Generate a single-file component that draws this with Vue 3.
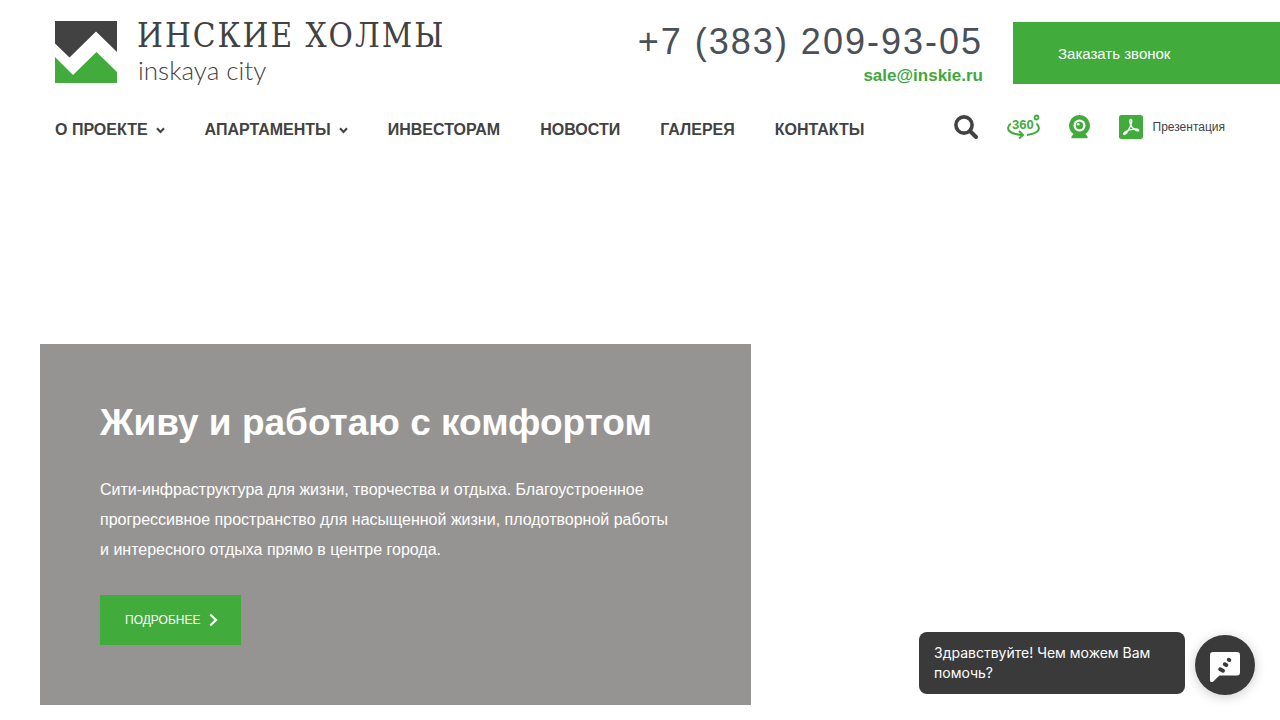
<script setup>
const nav = [
  { label: 'О ПРОЕКТЕ', sub: true },
  { label: 'АПАРТАМЕНТЫ', sub: true },
  { label: 'ИНВЕСТОРАМ' },
  { label: 'НОВОСТИ' },
  { label: 'ГАЛЕРЕЯ' },
  { label: 'КОНТАКТЫ' },
]
</script>

<template>
  <div class="page">
    <header>
      <div class="top">
        <a class="logo" href="#">
          <svg class="mark" width="62" height="62" viewBox="0 0 62 62" aria-hidden="true">
            <path fill="#424242" d="M0 0H62V31L41 10.500 14.500 36.500 0 22.500Z" />
            <path fill="#41ab3c" d="M0 36L18 54 41.500 31 62 51V62H0Z" />
          </svg>
          <span class="words">
            <span class="name">ИНСКИЕ ХОЛМЫ</span>
            <span class="latin">inskaya city</span>
          </span>
        </a>
        <div class="contacts">
          <a class="phone" href="tel:+73832099305">+7 (383) 209-93-05</a>
          <a class="mail" href="mailto:sale@inskie.ru">sale@inskie.ru</a>
        </div>
        <button class="call" type="button">Заказать звонок</button>
      </div>

      <div class="bar">
        <nav>
          <a v-for="item in nav" :key="item.label" href="#">
            {{ item.label }}
            <svg v-if="item.sub" width="9" height="7" viewBox="0 0 9 7" aria-hidden="true">
              <path d="M1 1.200L4.500 5 8 1.200" fill="none" stroke="#424242" stroke-width="2" />
            </svg>
          </a>
        </nav>
        <div class="tools">
          <button class="tool" type="button" aria-label="Поиск">
            <svg width="24" height="24" viewBox="0 0 24 24">
              <circle cx="10" cy="10" r="8.100" fill="none" stroke="#424242" stroke-width="3.600" />
              <path d="M16 16L22 22" stroke="#424242" stroke-width="4" stroke-linecap="round" />
            </svg>
          </button>
          <a class="tool" href="#" aria-label="Панорама 360">
            <svg width="33" height="26" viewBox="0 0 33 26" fill="none" stroke="#41ab3c" stroke-width="2">
              <path d="M4 9.500C2 11 1 12.500 1 14C1 17.500 6.500 20.300 15 21" />
              <path d="M12 17L16 21 12 24.500" />
              <path d="M29.500 9.500C31 11 32 12.500 32 14C32 17.500 27 20 20 20.900" />
              <circle cx="29.500" cy="3.500" r="2" stroke-width="1.800" />
              <text x="5" y="15" fill="#41ab3c" stroke="none" font-family="Liberation Sans, sans-serif" font-weight="700" font-size="13">360</text>
            </svg>
          </a>
          <a class="tool" href="#" aria-label="Веб-камера">
            <svg width="21" height="24" viewBox="0 0 21 24">
              <path fill="#41ab3c" d="M10.500 0A10.500 10.500 0 0 1 16.500 19L18.500 21.500V23.200H2.500V21.500L4.500 19A10.500 10.500 0 0 1 10.500 0Z" />
              <circle cx="10.500" cy="10.500" r="6" fill="#fff" />
              <circle cx="10.500" cy="10.500" r="3.700" fill="#41ab3c" />
              <circle cx="9.200" cy="9.200" r="1.300" fill="#fff" />
            </svg>
          </a>
          <a class="tool pdf" href="#">
            <svg width="24" height="24" viewBox="0 0 24 24" aria-hidden="true">
              <rect width="24" height="24" rx="2.500" fill="#41ab3c" />
              <path d="M11.500 4.500C13.500 3.800 12.800 8 11.300 11.300C9.300 15.700 6.500 20 5 19.300C3.600 18.500 7 15.800 11.500 14.600C15.500 13.500 20 13.900 19.700 15.500C19.300 17 14.500 14.500 12.500 11.300C10.800 8.500 10.200 4.900 11.500 4.500Z" fill="none" stroke="#fff" stroke-width="1.400" />
            </svg>
            <span>Презентация</span>
          </a>
        </div>
      </div>
    </header>

    <main>
      <section class="hero">
        <h1>Живу и работаю с комфортом</h1>
        <p>Сити-инфраструктура для жизни, творчества и отдыха. Благоустроенное прогрессивное пространство для насыщенной жизни, плодотворной работы и&nbsp;интересного отдыха прямо в центре города.</p>
        <a class="more" href="#">
          ПОДРОБНЕЕ
          <svg width="9" height="14" viewBox="0 0 9 14" aria-hidden="true">
            <path d="M1.200 1.500L7 7 1.200 12.500" fill="none" stroke="#fff" stroke-width="2.200" />
          </svg>
        </a>
      </section>
    </main>

    <aside class="chat">
      <p>Здравствуйте! Чем можем Вам помочь?</p>
      <button type="button" aria-label="Открыть чат">
        <svg width="30" height="30" viewBox="0 0 30 30">
          <path fill="#fff" d="M3 0H27A3 3 0 0 1 30 3V20.500A3 3 0 0 1 27 23.500H9.500L3 29.700C1.500 31 0 30 0 28V3A3 3 0 0 1 3 0Z" />
          <g stroke="#3a3a3a" stroke-width="4" stroke-linecap="round">
            <path d="M10.200 17.300L13 18.700" />
            <path d="M14.800 12.300L16.300 13.100" />
            <path d="M18.800 7.800L19.300 8" />
          </g>
        </svg>
      </button>
    </aside>
  </div>
</template>

<style>
body {
  margin: 0;
  background: #fff;
}
</style>

<style scoped>
.page {
  font-family: "Liberation Sans", Arial, sans-serif;
  color: #424242;
}
a {
  color: inherit;
  text-decoration: none;
}
button {
  border: 0;
  font-family: inherit;
  cursor: pointer;
}
svg {
  display: block;
  flex: none;
}
.top {
  display: flex;
  align-items: flex-start;
  padding: 21px 0 0 55px;
}
.logo {
  display: flex;
  gap: 20px;
}
.words {
  display: flex;
  flex-direction: column;
}
.name {
  font: 33px/30px "DejaVu Serif Condensed", "DejaVu Serif", serif;
  letter-spacing: 2px;
  white-space: nowrap;
}
.latin {
  font: 300 26px/38px Lato, sans-serif;
  padding-left: 1px;
}
.contacts {
  display: flex;
  flex-direction: column;
  align-items: flex-end;
  margin-left: auto;
  margin-right: 30px;
}
.phone {
  font-size: 36px;
  line-height: 42px;
  letter-spacing: 2px;
  color: #495057;
  white-space: nowrap;
}
.mail {
  font-size: 17px;
  font-weight: 700;
  line-height: 26px;
  color: #41a73c;
}
.call {
  width: 267px;
  height: 62px;
  margin-top: 1px;
  padding: 0 45px;
  background: #41ab3c;
  color: #fff;
  font-size: 15px;
  text-align: left;
}
.bar {
  display: flex;
  align-items: center;
  justify-content: space-between;
  padding: 23px 55px 0;
}
nav {
  display: flex;
  gap: 40px;
  padding-top: 6px;
}
nav a {
  display: flex;
  align-items: center;
  gap: 8px;
  font-size: 16px;
  font-weight: 700;
  line-height: 24px;
  white-space: nowrap;
}
.tools {
  display: flex;
  align-items: center;
  gap: 29px;
}
.tool {
  display: flex;
  align-items: center;
  padding: 0;
  background: none;
}
.pdf {
  gap: 10px;
  font-size: 12px;
}
.hero {
  box-sizing: border-box;
  width: 711px;
  max-width: calc(100% - 80px);
  margin: 202px 40px 0;
  padding: 57px 60px 60px;
  background: #969492;
  color: #fff;
}
.hero h1 {
  margin: 0 0 30px;
  font-size: 37px;
  line-height: 44px;
}
.hero p {
  margin: 0 0 30px;
  font-size: 16px;
  line-height: 30px;
}
.more {
  display: inline-flex;
  align-items: center;
  gap: 9px;
  height: 50px;
  padding: 0 23px 0 25px;
  background: #41ab3c;
  font-size: 12px;
  vertical-align: top;
}
.chat {
  position: fixed;
  right: 25px;
  bottom: 22px;
  display: flex;
  align-items: center;
  gap: 10px;
}
.chat p {
  box-sizing: border-box;
  width: 266px;
  margin: 0 0 4px;
  padding: 11px 15px;
  border-radius: 8px;
  background: #3a3a3a;
  color: #fff;
  font: 14px/20px Inter, sans-serif;
}
.chat button {
  display: flex;
  align-items: center;
  justify-content: center;
  box-sizing: border-box;
  width: 60px;
  height: 60px;
  padding: 4px 0 0;
  border-radius: 50%;
  background: #3a3a3a;
  box-shadow: 0 2px 12px rgba(0, 0, 0, 0.2);
}
</style>
